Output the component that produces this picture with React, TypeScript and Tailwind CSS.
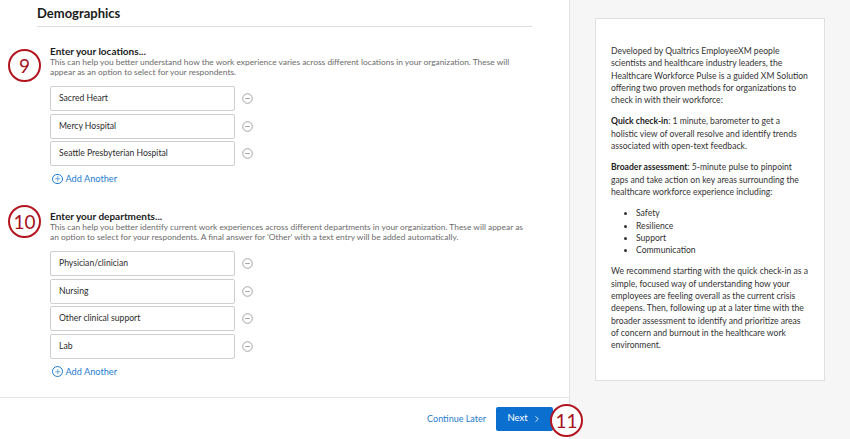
import { Plus, ChevronRight } from "lucide-react";

const LOCATIONS = ["Sacred Heart", "Mercy Hospital", "Seattle Presbyterian Hospital"];
const DEPARTMENTS = ["Physician/clinician", "Nursing", "Other clinical support", "Lab"];

function StepBadge({ n }: { n: string }) {
  return (
    <div className="flex h-[33px] w-[33px] items-center justify-center rounded-full border-[2.5px] border-[#b3141e] bg-white text-[19px] leading-none text-[#a5121b]">
      {n}
    </div>
  );
}

function MinusIcon() {
  return (
    <svg width="11" height="11" viewBox="0 0 11 11" className="text-[#9a9a9a]">
      <circle cx="5.5" cy="5.5" r="4.8" fill="none" stroke="currentColor" strokeWidth="0.9" />
      <line x1="3.2" y1="5.5" x2="7.8" y2="5.5" stroke="currentColor" strokeWidth="0.9" />
    </svg>
  );
}

function AddAnother() {
  return (
    <button className="ml-[2px] flex items-center gap-[3px] text-[9.2px] leading-[12px] text-[#1f7ccf]">
      <span className="flex h-[10.5px] w-[10.5px] items-center justify-center rounded-full border border-[#1f7ccf]">
        <Plus size={7.5} strokeWidth={2} />
      </span>
      Add Another
    </button>
  );
}

function EntryList({ items }: { items: string[] }) {
  return (
    <div className="flex flex-col gap-[2.5px]">
      {items.map((item) => (
        <div key={item} className="flex items-center">
          <div className="flex h-[25px] w-[185px] items-center rounded-[2px] border border-[#cfcfcf] pl-[8px] text-[8.6px] text-[#2b2b2b]">
            {item}
          </div>
          <span className="ml-[7px] flex">
            <MinusIcon />
          </span>
        </div>
      ))}
    </div>
  );
}

function Section({
  step,
  title,
  text,
  items,
  badgeTop,
}: {
  step: string;
  title: string;
  text: string;
  items: string[];
  badgeTop: string;
}) {
  return (
    <div className="flex">
      <div className="w-[50px] shrink-0 pl-[8px]">
        <div className={badgeTop}>
          <StepBadge n={step} />
        </div>
      </div>
      <div className="w-[482px]">
        <h2 className="text-[10px] font-bold leading-[12px] text-[#1b1b1b]">{title}</h2>
        <p className="text-[8.4px] leading-[10px] text-[#6b6b6b]">{text}</p>
        <div className="mt-[9px]">
          <EntryList items={items} />
        </div>
        <div className="mt-[7px]">
          <AddAnother />
        </div>
      </div>
    </div>
  );
}

export default function App() {
  return (
    <div
      className="relative flex h-[439px] w-[850px] overflow-hidden bg-white"
      style={{ fontFamily: "Lato, 'Open Sans', sans-serif" }}
    >
      {/* form column */}
      <div className="flex w-[570px] shrink-0 flex-col border-r border-[#e2e2e2]">
        <div className="flex-1">
          <div className="px-[37px] pt-[4px]">
            <h1 className="border-b border-[#dcdcdc] pb-[4px] text-[13px] font-bold leading-[18px] text-[#1b1b1b]">
              Demographics
            </h1>
          </div>

          <div className="mt-[18px]">
            <Section
              step="9"
              title="Enter your locations..."
              text="This can help you better understand how the work experience varies across different locations in your organization. These will appear as an option to select for your respondents."
              items={LOCATIONS}
              badgeTop="mt-[4px]"
            />
          </div>

          <div className="mt-[25px]">
            <Section
              step="10"
              title="Enter your departments..."
              text="This can help you better identify current work experiences across different departments in your organization. These will appear as an option to select for your respondents. A final answer for 'Other' with a text entry will be added automatically."
              items={DEPARTMENTS}
              badgeTop="mt-[-5px]"
            />
          </div>
        </div>

        {/* footer actions */}
        <div className="flex h-[42px] items-center justify-end gap-[10px] border-t border-[#e4e4e4] pr-[16px]">
          <button className="text-[9px] text-[#1f7ccf]">Continue Later</button>
          <button className="flex h-[24px] w-[57px] items-center justify-center gap-[4px] rounded-[2px] bg-[#0b6fd0] text-[9.5px] text-white">
            Next
            <ChevronRight size={10} strokeWidth={2} />
          </button>
        </div>
      </div>

      {/* info column */}
      <div className="flex-1 bg-[#f6f6f6] pl-[25px] pt-[18px]">
        <div className="w-[230px] border border-[#e0e0e0] bg-white px-[15px] pb-[28px] pt-[26px] text-[8.6px] leading-[12.3px] text-[#333]">
          <p>
            Developed by Qualtrics EmployeeXM people scientists and healthcare industry leaders, the
            Healthcare Workforce Pulse is a guided XM Solution offering two proven methods for
            organizations to check in with their workforce:
          </p>
          <p className="mt-[9px]">
            <b className="text-[#1b1b1b]">Quick check-in</b>: 1 minute, barometer to get a holistic
            view of overall resolve and identify trends associated with open-text feedback.
          </p>
          <p className="mt-[9px]">
            <b className="text-[#1b1b1b]">Broader assessment</b>: 5-minute pulse to pinpoint gaps and
            take action on key areas surrounding the healthcare workforce experience including:
          </p>
          <ul className="mt-[9px] list-disc pl-[25px]">
            <li>Safety</li>
            <li>Resilience</li>
            <li>Support</li>
            <li>Communication</li>
          </ul>
          <p className="mt-[9px]">
            We recommend starting with the quick check-in as a simple, focused way of understanding
            how your employees are feeling overall as the current crisis deepens. Then, following
            up at a later time with the broader assessment to identify and prioritize areas of
            concern and burnout in the healthcare work environment.
          </p>
        </div>
      </div>

      {/* step marker over the footer */}
      <div className="absolute left-[550px] top-[404px]">
        <StepBadge n="11" />
      </div>
    </div>
  );
}
